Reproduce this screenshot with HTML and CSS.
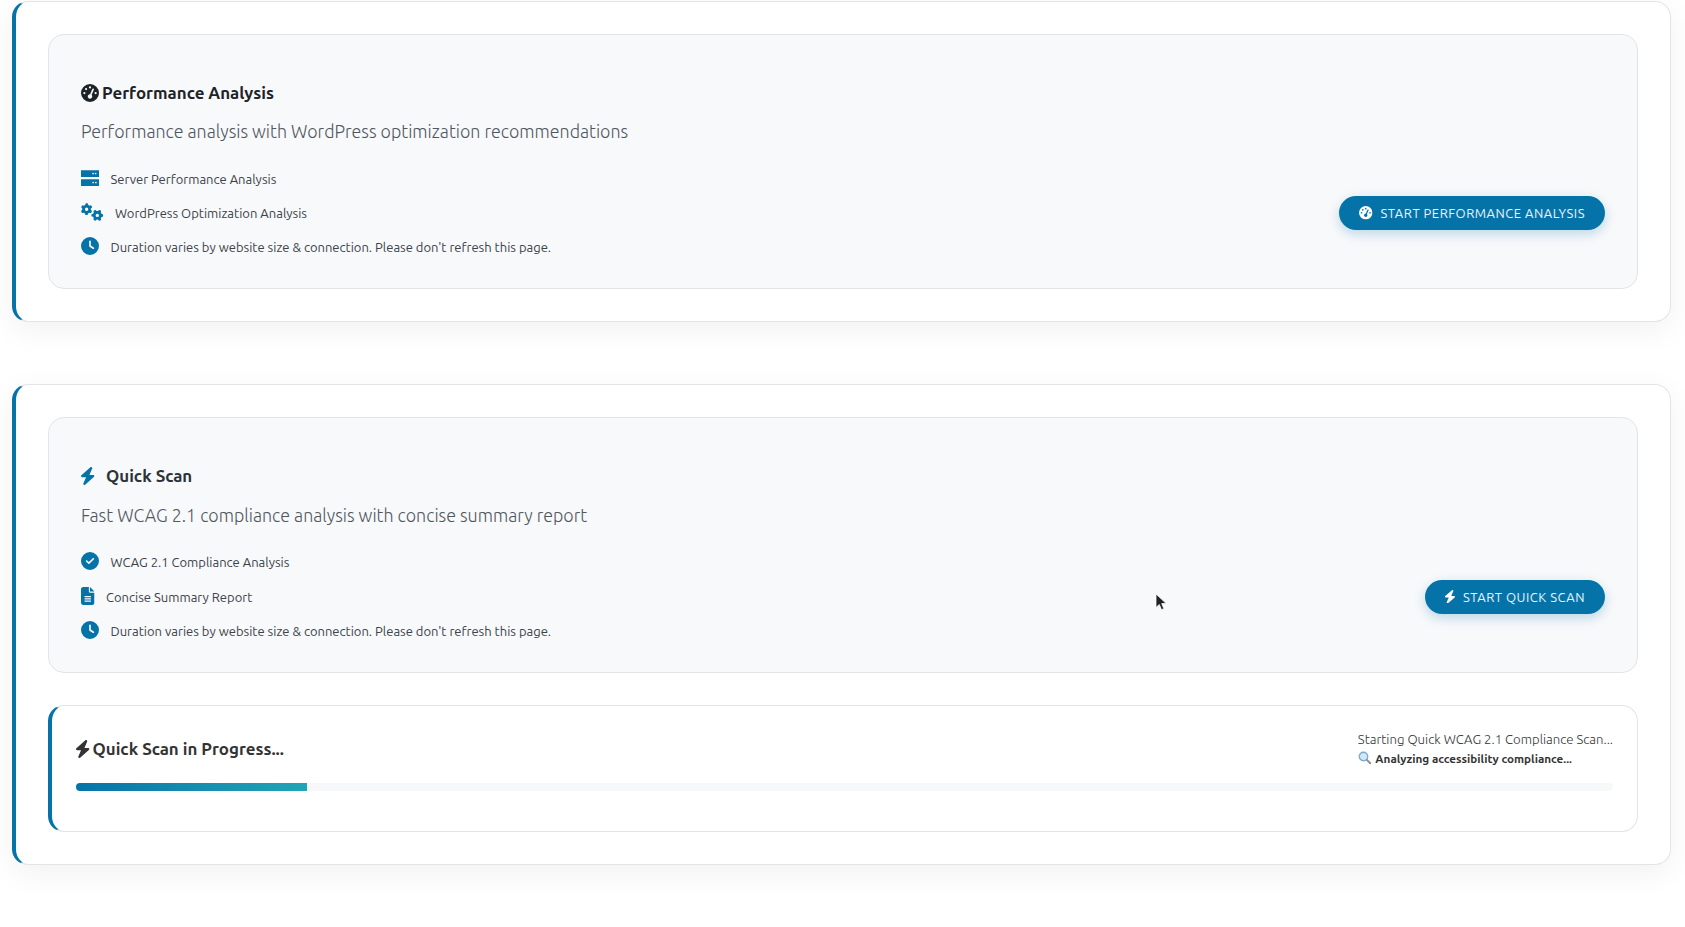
FILE: index.html
```html
<!DOCTYPE html>
<html lang="en">
<head>
<meta charset="utf-8">
<title>Scans</title>
<link rel="stylesheet" href="styles.css">
</head>
<body>
<svg class="sprite" width="0" height="0" aria-hidden="true">
  <defs>
    <symbol id="gauge" viewBox="0 0 512 512"><path d="M0 256a256 256 0 1 1 512 0A256 256 0 1 1 0 256zM288 96a32 32 0 1 0 -64 0 32 32 0 1 0 64 0zM256 416c35.3 0 64-28.7 64-64c0-17.4-6.9-33.1-18.1-44.6L366 161.7c5.3-12.1-.2-26.3-12.3-31.6s-26.3 .2-31.6 12.3L257.9 288c-.6 0-1.3 0-1.9 0c-35.3 0-64 28.7-64 64s28.7 64 64 64zM176 144a32 32 0 1 0 -64 0 32 32 0 1 0 64 0zM96 288a32 32 0 1 0 0-64 32 32 0 1 0 0 64zm352-32a32 32 0 1 0 -64 0 32 32 0 1 0 64 0z"/></symbol>
    <symbol id="server" viewBox="0 0 512 512"><path d="M0 32H512V224H0V32zm344 72a24 24 0 1 1 0 48 24 24 0 1 1 0-48zm48 24a24 24 0 1 1 48 0 24 24 0 1 1 -48 0zM0 288H512V480H0V288zm344 72a24 24 0 1 1 0 48 24 24 0 1 1 0-48zm56 24a24 24 0 1 1 48 0 24 24 0 1 1 -48 0z" fill-rule="evenodd"/></symbol>
    <symbol id="gears" viewBox="0 0 640 512"><path d="M308.5 135.3c7.1-6.3 9.9-16.2 6.2-25c-2.3-5.3-4.8-10.5-7.6-15.5L304 89.4c-3-5-6.3-9.9-9.8-14.6c-5.7-7.6-15.7-10.1-24.7-7.1l-28.2 9.3c-10.7-8.8-23-16-36.2-20.9L198 27.1c-1.9-9.3-9.1-16.7-18.5-17.8C173.9 8.4 168.2 8 162.4 8h-.8c-5.8 0-11.5 .4-17.1 1.3c-9.4 1.1-16.6 8.5-18.5 17.8L120 56.1c-13.3 5-25.5 12.1-36.2 20.9L55.5 67.7c-9-3-19-.5-24.7 7.1c-3.5 4.7-6.8 9.6-9.9 14.6l-3 5.3c-2.8 5-5.3 10.2-7.6 15.6c-3.7 8.7-.9 18.6 6.2 25l22.2 19.8C32.6 161.9 32 168.9 32 176s.6 14.1 1.7 20.9L11.5 216.7c-7.1 6.3-9.9 16.2-6.2 25c2.3 5.3 4.8 10.5 7.6 15.6l3 5.2c3 5.1 6.3 9.9 9.9 14.6c5.7 7.6 15.7 10.1 24.7 7.1l28.2-9.3c10.7 8.8 23 16 36.2 20.9l6.1 29.1c1.9 9.3 9.1 16.7 18.5 17.8c5.7 .9 11.5 1.3 17.4 1.3s11.7-.4 17.4-1.3c9.4-1.1 16.6-8.5 18.5-17.8l6.1-29.1c13.3-5 25.5-12.1 36.2-20.9l28.2 9.3c9 3 19 .5 24.7-7.1c3.5-4.7 6.8-9.5 9.8-14.6l3.1-5.4c2.8-5 5.3-10.2 7.6-15.5c3.7-8.7 .9-18.6-6.2-25l-22.2-19.8c1.1-6.8 1.7-13.8 1.7-20.9s-.6-14.1-1.7-20.9l22.2-19.8zM112 176a48 48 0 1 1 96 0 48 48 0 1 1 -96 0zM504.7 500.5c6.3 7.1 16.2 9.9 25 6.2c5.3-2.3 10.5-4.8 15.5-7.6l5.4-3.1c5-3 9.9-6.3 14.6-9.8c7.6-5.7 10.1-15.7 7.1-24.7l-9.3-28.2c8.8-10.7 16-23 20.9-36.2l29.1-6.1c9.3-1.9 16.7-9.1 17.8-18.5c.9-5.7 1.3-11.5 1.3-17.4s-.4-11.7-1.3-17.4c-1.1-9.4-8.5-16.6-17.8-18.5L583.9 307c-5-13.3-12.1-25.5-20.9-36.2l9.3-28.2c3-9 .5-19-7.1-24.7c-4.7-3.5-9.6-6.8-14.6-9.9l-5.3-3c-5-2.8-10.2-5.3-15.6-7.6c-8.7-3.7-18.6-.9-25 6.2l-19.8 22.2c-6.8-1.1-13.8-1.7-20.9-1.7s-14.1 .6-20.9 1.7l-19.8-22.2c-6.3-7.1-16.2-9.9-25-6.2c-5.3 2.3-10.5 4.8-15.6 7.6l-5.2 3c-5.1 3-9.9 6.3-14.6 9.9c-7.6 5.7-10.1 15.7-7.1 24.7l9.3 28.2c-8.8 10.7-16 23-20.9 36.2L315.1 313c-9.3 1.9-16.7 9.1-17.8 18.5c-.9 5.7-1.3 11.5-1.3 17.4s.4 11.7 1.3 17.4c1.1 9.4 8.5 16.6 17.8 18.5l29.1 6.1c5 13.3 12.1 25.5 20.9 36.2l-9.3 28.2c-3 9-.5 19 7.1 24.7c4.7 3.5 9.5 6.8 14.6 9.8l5.4 3.1c5 2.8 10.2 5.3 15.5 7.6c8.7 3.7 18.6 .9 25-6.2l19.8-22.2c6.8 1.1 13.8 1.7 20.9 1.7s14.1-.6 20.9-1.7l19.8 22.2zM464 304a48 48 0 1 1 0 96 48 48 0 1 1 0-96z"/></symbol>
    <symbol id="clock" viewBox="0 0 512 512"><path d="M256 0a256 256 0 1 1 0 512A256 256 0 1 1 256 0zM232 120V256c0 8 4 15.5 10.7 20l96 64c11 7.4 25.9 4.4 33.3-6.7s4.4-25.9-6.7-33.3L280 243.2V120c0-13.3-10.7-24-24-24s-24 10.7-24 24z"/></symbol>
    <symbol id="check" viewBox="0 0 512 512"><path d="M256 512A256 256 0 1 0 256 0a256 256 0 1 0 0 512zM369 209L241 337c-9.4 9.4-24.6 9.4-33.9 0l-64-64c-9.4-9.4-9.4-24.6 0-33.9s24.6-9.4 33.9 0l47 47L335 175c9.4-9.4 24.6-9.4 33.9 0s9.4 24.6 0 33.9z"/></symbol>
    <symbol id="file" viewBox="0 0 384 512"><path d="M64 0C28.7 0 0 28.7 0 64V448c0 35.3 28.7 64 64 64H320c35.3 0 64-28.7 64-64V160H256c-17.7 0-32-14.3-32-32V0H64zM256 0V128H384L256 0zM112 256H272c8.8 0 16 7.2 16 16s-7.2 16-16 16H112c-8.8 0-16-7.2-16-16s7.2-16 16-16zm0 64H272c8.8 0 16 7.2 16 16s-7.2 16-16 16H112c-8.8 0-16-7.2-16-16s7.2-16 16-16zm0 64H272c8.8 0 16 7.2 16 16s-7.2 16-16 16H112c-8.8 0-16-7.2-16-16s7.2-16 16-16z"/></symbol>
    <symbol id="bolt" viewBox="32 0 384 512"><path d="M349.4 44.6c5.9-13.7 1.5-29.7-10.6-38.5s-28.6-8-39.9 1.8l-256 224c-10 8.8-13.6 22.9-8.9 35.3S50.7 288 64 288H175.5L98.6 467.4c-5.9 13.7-1.5 29.7 10.6 38.5s28.6 8 39.9-1.8l256-224c10-8.8 13.6-22.9 8.9-35.3s-16.6-20.7-30-20.7H272.5L349.4 44.6z"/></symbol>
  </defs>
</svg>

<section class="card">
  <div class="panel">
    <h3 class="panel-title">
      <svg class="ico ico-dark ico-gap-sm"><use href="#gauge"/></svg>Performance Analysis
    </h3>
    <p class="panel-desc">Performance analysis with WordPress optimization recommendations</p>
    <div class="panel-row">
      <ul class="features">
        <li class="feature"><svg class="ico ico-blue"><use href="#server"/></svg>Server Performance Analysis</li>
        <li class="feature"><svg class="ico ico-wide ico-blue"><use href="#gears"/></svg>WordPress Optimization Analysis</li>
        <li class="feature"><svg class="ico ico-blue"><use href="#clock"/></svg>Duration varies by website size &amp; connection. Please don't refresh this page.</li>
      </ul>
      <button class="btn" type="button"><svg class="btn-ico"><use href="#gauge"/></svg>START PERFORMANCE ANALYSIS</button>
    </div>
  </div>
</section>

<section class="card">
  <div class="panel">
    <h3 class="panel-title panel-title-alt">
      <svg class="ico ico-narrow ico-blue"><use href="#bolt"/></svg>Quick Scan
    </h3>
    <p class="panel-desc">Fast WCAG 2.1 compliance analysis with concise summary report</p>
    <div class="panel-row panel-row-tight">
      <ul class="features">
        <li class="feature"><svg class="ico ico-blue"><use href="#check"/></svg>WCAG 2.1 Compliance Analysis</li>
        <li class="feature feature-tall"><svg class="ico ico-narrow ico-blue"><use href="#file"/></svg>Concise Summary Report</li>
        <li class="feature"><svg class="ico ico-blue"><use href="#clock"/></svg>Duration varies by website size &amp; connection. Please don't refresh this page.</li>
      </ul>
      <button class="btn" type="button"><svg class="btn-ico btn-ico-narrow"><use href="#bolt"/></svg>START QUICK SCAN</button>
    </div>
  </div>

  <div class="progress">
    <div class="progress-head">
      <h4 class="progress-title"><svg class="ico ico-narrow ico-gray ico-gap-xs"><use href="#bolt"/></svg>Quick Scan in Progress...</h4>
      <div class="progress-status">
        <div class="status-line">Starting Quick WCAG 2.1 Compliance Scan...</div>
        <div class="status-step">
          <svg class="lens" viewBox="0 0 16 16"><circle cx="6.5" cy="6.5" r="5" fill="#cfe9f7" stroke="#7fa9c4" stroke-width="1.6"/><path d="M10.5 10.5l4 4" stroke="#8a8f94" stroke-width="2.4" stroke-linecap="round"/></svg>Analyzing accessibility compliance...
        </div>
      </div>
    </div>
    <div class="bar"><div class="bar-fill" style="width:15%"></div></div>
  </div>
</section>

<svg class="cursor" viewBox="0 0 12 18"><path d="M1 1v13.5l3.3-3 2.2 5.2 2.4-1-2.2-5.1h4.6z" fill="#222" stroke="#fff" stroke-width=".8"/></svg>
</body>
</html>
```

FILE: styles.css
```css
* { box-sizing: border-box; }
html, body { margin: 0; height: 100%; background: #fff; overflow: hidden; }
body {
  position: relative;
  padding: 1px 14px 0 12px;
  font-family: "Ubuntu", "Noto Sans", "Open Sans", sans-serif;
  color: #333;
}
.sprite { position: absolute; }
.card {
  background: #fff;
  border: 1px solid #e2e4e7;
  border-left: 4px solid #0673a8;
  border-radius: 16px;
  padding: 32px;
  margin-bottom: 62px;
  box-shadow: 0 8px 32px rgba(0, 0, 0, 0.06);
}
.panel {
  background: #f8f9fb;
  border: 1px solid #e2e4e9;
  border-radius: 16px;
  padding: 46px 32px 24px;
}
.panel-title {
  display: flex;
  align-items: center;
  margin: 0;
  font-size: 16.9px;
  font-weight: 700;
  line-height: 24px;
  color: #1d2327;
}
.panel-title-alt { color: #2c3338; padding-bottom: 1px; box-sizing: content-box; }
.panel-desc {
  margin: 14px 0 0;
  font-size: 17.83px;
  font-weight: 300;
  line-height: 25px;
  color: #50575e;
}
.panel-row {
  display: flex;
  align-items: center;
  justify-content: space-between;
  margin-top: 18px;
}
.panel-row-tight { margin-top: 17px; }
.features { list-style: none; margin: 0; padding: 0; }
.feature {
  display: flex;
  align-items: center;
  height: 34px;
  font-size: 13px;
  color: #3c434a;
}
.feature-tall { height: 35px; }
.ico { flex: none; width: 18px; height: 18px; margin-right: 11.5px; fill: currentColor; }
.feature .ico { margin-bottom: 2px; }
.ico-wide { width: 22.5px; margin-right: 11.5px; }
.ico-narrow { width: 13.5px; margin-right: 11.5px; }
.ico-gap-sm { margin-right: 3px; }
.ico-gap-xs { margin-right: 3px; }
.ico-blue { color: #0673a8; }
.ico-dark { color: #1d2327; }
.ico-gray { color: #333; }
.btn {
  display: inline-flex;
  align-items: center;
  height: 34px;
  padding: 0 20px;
  border: 0;
  border-radius: 17px;
  background: #0673a8;
  color: #e9f4fa;
  font-family: inherit;
  font-size: 13px;
  letter-spacing: 0.5px;
  box-shadow: 0 4px 12px rgba(6, 115, 168, 0.25);
}
.btn-ico { width: 13.5px; height: 13.5px; margin-right: 8px; fill: #fff; }
.btn-ico-narrow { width: 10px; }
.progress {
  margin-top: 32px;
  height: 127px;
  background: #fff;
  border: 1px solid #e2e4e7;
  border-left: 4px solid #0673a8;
  border-radius: 16px;
  padding: 24px;
}
.progress-head { display: flex; align-items: center; justify-content: space-between; height: 37px; }
.progress-title {
  display: flex;
  align-items: center;
  margin: 0;
  font-size: 16.9px;
  font-weight: 700;
  color: #333;
}
.status-line { font-size: 13.2px; font-weight: 300; line-height: 19px; color: #333; }
.status-step { display: flex; align-items: center; font-size: 11.7px; font-weight: 700; line-height: 19px; color: #333; }
.lens { width: 13.5px; height: 13.5px; margin-right: 4px; }
.bar { margin-top: 16px; height: 8px; background: #f7f8fa; border-radius: 4px; overflow: hidden; }
.bar-fill { height: 100%; background: linear-gradient(90deg, #0673a8, #21a5b6); }
.cursor { position: absolute; left: 1155px; top: 593px; width: 12px; height: 18px; }
```
